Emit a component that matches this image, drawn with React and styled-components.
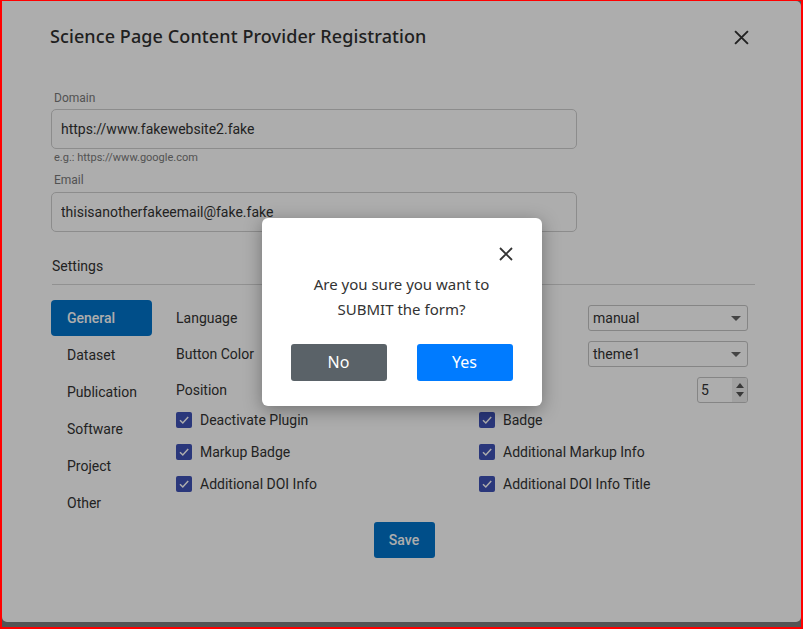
import React from 'react'
import styled, { createGlobalStyle } from 'styled-components'

const Global = createGlobalStyle`
  html, body { margin: 0; padding: 0; }
  body { font-family: Roboto, "Liberation Sans", sans-serif; }
  * { box-sizing: border-box; }
`

const Frame = styled.div`
  position: relative;
  width: 803px;
  height: 629px;
  border: 2px solid #ff0000;
  border-top-width: 1px;
  background: #7d7d7d;
  overflow: hidden;
`

const Dialog = styled.div`
  height: 621px;
  background: #ffffff;
  border-radius: 0 5px 5px 5px;
  padding: 0 46px 0 48px;
`

const Header = styled.div`
  display: flex;
  justify-content: space-between;
  align-items: center;
  height: 70px;
  padding-right: 6px;
`

const Title = styled.h2`
  margin: 0;
  font-family: "Noto Sans", "Open Sans", sans-serif;
  font-weight: 500;
  font-size: 18px;
  color: #303030;
  letter-spacing: 0.1px;
`

const CloseWrap = styled.span`
  display: flex;
  margin-top: ${p => p.$offset || 0}px;
`

const CloseIcon = ({ size = 14, offset = 0 }) => (
  <CloseWrap $offset={offset}>
    <svg width={size} height={size} viewBox="0 0 14 14">
      <path d="M1 1 L13 13 M13 1 L1 13" stroke="#333" strokeWidth="1.8" />
    </svg>
  </CloseWrap>
)

const Field = styled.div`
  display: flex;
  flex-direction: column;
  width: 526px;
  margin-left: 1px;
`

const Label = styled.label`
  font-size: 12px;
  color: #7a7a7a;
  margin: 0 0 ${p => p.$gap || 4}px 3px;
  line-height: 14px;
`

const TextInput = styled.input`
  height: 40px;
  border: 1px solid #cfcfcf;
  border-radius: 5px;
  padding: 0 9px;
  font-family: Roboto, sans-serif;
  font-size: 14px;
  color: #333;
  background: #fff;
  outline: none;
`

const Helper = styled.div`
  font-size: 11px;
  color: #7a7a7a;
  margin: 3px 0 9px 3px;
  line-height: 12px;
`

const Form = styled.div`
  padding-top: 20px;
`

const SectionTitle = styled.div`
  margin-top: 26px;
  margin-left: 2px;
  font-size: 14px;
  color: #333;
  padding-bottom: 10px;
  border-bottom: 1px solid #d6d6d6;
`

const Settings = styled.div`
  display: grid;
  grid-template-columns: 101px 1fr;
  column-gap: 24px;
  margin-top: 15px;
  margin-left: 1px;
`

const Tabs = styled.div`
  display: flex;
  flex-direction: column;
  gap: 1px;
`

const Tab = styled.div`
  height: 36px;
  display: flex;
  align-items: center;
  padding-left: 16px;
  font-size: 14px;
  border-radius: 4px;
  color: ${p => (p.$active ? '#ffffff' : '#333')};
  background: ${p => (p.$active ? '#0074cb' : 'transparent')};
  font-weight: ${p => (p.$active ? 500 : 400)};
`

const Panel = styled.div`
  display: flex;
  flex-direction: column;
  width: 572px;
`

const OptionRow = styled.div`
  display: flex;
  justify-content: space-between;
  align-items: center;
  height: 36px;
  font-size: 14px;
  color: #333;
`

const Select = styled.div`
  width: 160px;
  height: 26px;
  border: 1px solid #c4c4c4;
  border-radius: 3px;
  display: flex;
  align-items: center;
  justify-content: space-between;
  padding: 0 6px 0 4px;
  font-size: 14px;
  color: #333;
`

const Caret = styled.span`
  width: 0;
  height: 0;
  border-left: 5px solid transparent;
  border-right: 5px solid transparent;
  border-top: 5px solid #666;
`

const NumberBox = styled.div`
  width: 51px;
  height: 26px;
  border: 1px solid #c4c4c4;
  border-radius: 3px;
  display: flex;
  align-items: center;
  justify-content: space-between;
  font-size: 14px;
  color: #333;
  padding-left: 3px;
  overflow: hidden;
`

const Spinner = styled.div`
  width: 15px;
  height: 100%;
  background: #eeeeee;
  display: flex;
  flex-direction: column;
  align-items: center;
  justify-content: space-around;
  padding: 3px 0;
`

const Arrow = styled.span`
  width: 0;
  height: 0;
  border-left: 4px solid transparent;
  border-right: 4px solid transparent;
  ${p => (p.$up ? 'border-bottom: 5px solid #555;' : 'border-top: 5px solid #555;')}
`

const Checks = styled.div`
  display: grid;
  grid-template-columns: 303px 1fr;
  grid-auto-rows: 32px;
  margin-top: -4px;
`

const CheckItem = styled.div`
  display: flex;
  align-items: center;
  gap: 8px;
  font-size: 14px;
  color: #333;
`

const Box = styled.span`
  width: 16px;
  height: 16px;
  border-radius: 2px;
  background: #3f51b5;
  display: flex;
  align-items: center;
  justify-content: center;
`

const Footer = styled.div`
  display: flex;
  justify-content: center;
  margin-top: 1px;
  padding-left: 3px;
`

const SaveButton = styled.button`
  width: 61px;
  height: 36px;
  border: none;
  border-radius: 3px;
  background: #0074cb;
  color: #fff;
  font-family: Roboto, sans-serif;
  font-size: 14px;
  font-weight: 500;
`

const Backdrop = styled.div`
  position: absolute;
  inset: 0;
  background: rgba(0, 0, 0, 0.32);
  display: flex;
  align-items: center;
  justify-content: center;
  padding-bottom: 5px;
`

const Modal = styled.div`
  width: 280px;
  height: 188px;
  background: #fff;
  border-radius: 6px;
  box-shadow: 0 4px 18px rgba(0, 0, 0, 0.35);
  padding: 29px 29px 25px;
  display: flex;
  flex-direction: column;
  font-family: "Noto Sans", "Open Sans", sans-serif;
`

const ModalClose = styled.div`
  display: flex;
  justify-content: flex-end;
  height: 14px;
`

const Message = styled.p`
  margin: 11px 0 0;
  text-align: center;
  font-size: 15px;
  line-height: 25px;
  color: #333;
`

const Actions = styled.div`
  display: flex;
  justify-content: space-between;
  margin-top: 22px;
`

const ModalButton = styled.button`
  width: 96px;
  height: 37px;
  border: none;
  border-radius: 3px;
  color: #fff;
  font-family: "Noto Sans", sans-serif;
  font-size: 16px;
  background: ${p => (p.$primary ? '#007bff' : '#5a6268')};
`

const Check = () => (
  <svg width="12" height="12" viewBox="0 0 12 12">
    <path d="M2 6.2 L4.8 9 L10.2 3" fill="none" stroke="#fff" strokeWidth="1.5" />
  </svg>
)

const tabs = ['General', 'Dataset', 'Publication', 'Software', 'Project', 'Other']
const checks = [
  'Deactivate Plugin', 'Badge',
  'Markup Badge', 'Additional Markup Info',
  'Additional DOI Info', 'Additional DOI Info Title',
]

export default function App() {
  return (
    <>
      <Global />
      <Frame>
        <Dialog>
          <Header>
            <Title>Science Page Content Provider Registration</Title>
            <CloseIcon size={15} offset={2} />
          </Header>
          <Form>
            <Field>
              <Label>Domain</Label>
              <TextInput readOnly value="https://www.fakewebsite2.fake" />
              <Helper>e.g.: https://www.google.com</Helper>
            </Field>
            <Field>
              <Label $gap={5}>Email</Label>
              <TextInput readOnly value="thisisanotherfakeemail@fake.fake" />
            </Field>
            <SectionTitle>Settings</SectionTitle>
            <Settings>
              <Tabs>
                {tabs.map((t, i) => (
                  <Tab key={t} $active={i === 0}>{t}</Tab>
                ))}
              </Tabs>
              <Panel>
                <OptionRow>
                  <span>Language</span>
                  <Select>manual<Caret /></Select>
                </OptionRow>
                <OptionRow>
                  <span>Button Color</span>
                  <Select>theme1<Caret /></Select>
                </OptionRow>
                <OptionRow>
                  <span>Position</span>
                  <NumberBox>5<Spinner><Arrow $up /><Arrow /></Spinner></NumberBox>
                </OptionRow>
                <Checks>
                  {checks.map(c => (
                    <CheckItem key={c}><Box><Check /></Box>{c}</CheckItem>
                  ))}
                </Checks>
              </Panel>
            </Settings>
            <Footer>
              <SaveButton>Save</SaveButton>
            </Footer>
          </Form>
        </Dialog>
        <Backdrop>
          <Modal>
            <ModalClose><CloseIcon size={14} /></ModalClose>
            <Message>Are you sure you want to<br />SUBMIT the form?</Message>
            <Actions>
              <ModalButton>No</ModalButton>
              <ModalButton $primary>Yes</ModalButton>
            </Actions>
          </Modal>
        </Backdrop>
      </Frame>
    </>
  )
}
